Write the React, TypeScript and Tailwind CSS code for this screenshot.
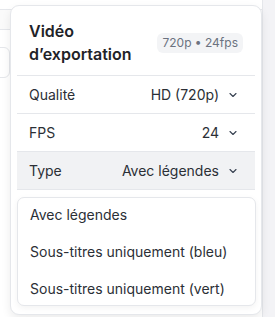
import { ChevronDown } from 'lucide-react';

const rows = [
  { label: 'Qualité', value: 'HD (720p)' },
  { label: 'FPS', value: '24' },
  { label: 'Type', value: 'Avec légendes', active: true },
];

const options = ['Avec légendes', 'Sous-titres uniquement (bleu)', 'Sous-titres uniquement (vert)'];

export default function App() {
  return (
    <div
      className="relative h-[317px] w-[275px] overflow-hidden bg-white text-[#1f2328]"
      style={{ fontFamily: 'Inter, "Noto Sans", sans-serif' }}
    >
      {/* page behind the popover */}
      <div className="flex h-full">
        <div className="flex-1">
          <div className="mt-[9px] h-[21px] border-y border-[#e5e7eb] bg-[#fafafa]" />
          <div className="ml-[-20px] mt-[17px] h-[31px] w-[30px] rounded-md border border-[#e5e7eb]" />
        </div>
        <div className="w-[13px] border-l border-[#e5e7eb] bg-[#f3f3f6]" />
      </div>

      {/* export popover */}
      <div className="absolute left-[10px] top-[5px] w-[252px] rounded-[9px] border border-[#e5e7eb] bg-white px-[6px] pb-[6px] shadow-[0_4px_10px_rgba(0,0,0,0.08)]">
        <div className="flex items-center justify-between border-b border-[#e5e7eb] pb-[9px] pl-3 pr-[12px] pt-[14px]">
          <h2 className="text-[16px] font-semibold leading-[23px] text-[#1f2328]">
            Vidéo
            <br />
            d’exportation
          </h2>
          <span className="rounded-md bg-[#f3f4f6] px-[5px] py-[2px] text-[12px] leading-[16px] text-[#6b7280]">
            720p • 24fps
          </span>
        </div>

        {rows.map((row) => (
          <div
            key={row.label}
            className={`flex h-[38px] items-center justify-between border-b border-[#e5e7eb] pl-3 pr-[16px] text-[14px] ${
              row.active ? 'bg-[#f1f2f4]' : ''
            }`}
          >
            <span className="text-[#2b2f36]">{row.label}</span>
            <span className="flex items-center gap-[8px] text-[#2b2f36]">
              {row.value}
              <ChevronDown size={12} strokeWidth={2.25} className="text-[#374151]" />
            </span>
          </div>
        ))}

        <div className="h-[58px] border-b border-[#e5e7eb]" />
        <div className="h-[60px]" />

        {/* open select menu */}
        <div className="absolute left-[6px] top-[191px] flex w-[239px] flex-col gap-[4px] rounded-[7px] border border-[#e5e7eb] bg-white shadow-[0_2px_6px_rgba(0,0,0,0.05)]">
          {options.map((opt) => (
            <div key={opt} className="flex h-[33px] items-center pl-[12px] text-[14px] text-[#2b2f36]">
              {opt}
            </div>
          ))}
        </div>
      </div>
    </div>
  );
}
